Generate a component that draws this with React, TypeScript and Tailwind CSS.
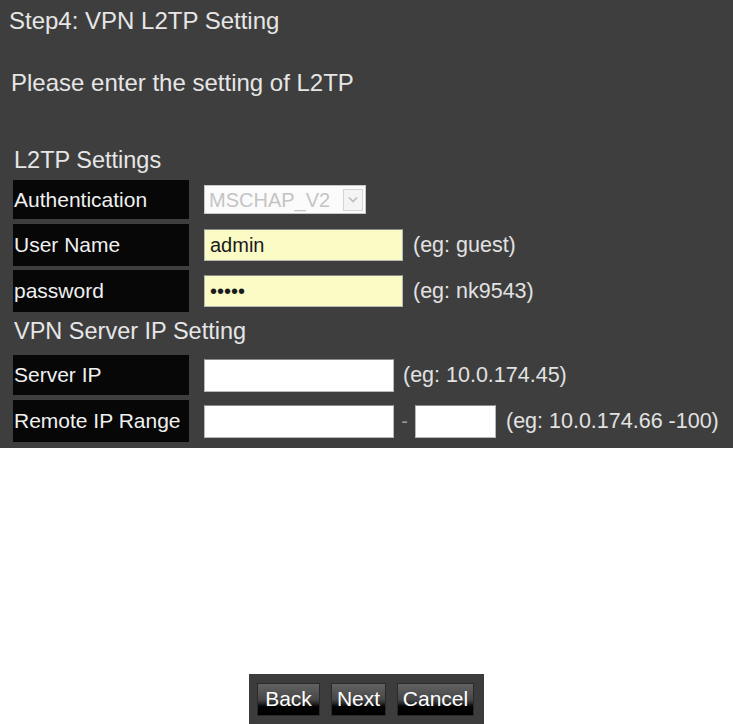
const font = "font-['Liberation_Sans',Arial,sans-serif]";

function Label({ children }: { children: React.ReactNode }) {
  return (
    <div className="w-[176px] h-full bg-[#070707] flex items-center pl-[1px] text-[21px] text-[#f0f0f0] shrink-0">
      {children}
    </div>
  );
}

function Hint({ children }: { children: React.ReactNode }) {
  return <span className="text-[21.5px] text-[#e2e2e2] whitespace-nowrap">{children}</span>;
}

function TextBox({ width, value, yellow, type = "text" }: { width: string; value?: string; yellow?: boolean; type?: string }) {
  return (
    <input
      type={type}
      readOnly
      defaultValue={value}
      className={`${width} ${yellow ? "h-[32px] bg-[#fbfbc6]" : "h-[33px] bg-white"} border border-[#b8b8b8] border-t-[#8a8a8a] px-[5px] text-[20px] text-[#1a1a1a] outline-none ${font}`}
    />
  );
}

export default function App() {
  return (
    <div className={`w-[733px] h-[724px] overflow-hidden bg-white ${font}`}>
      <div className="h-[448px] bg-[#3e3e3e] text-[#e6e6e6]">
        <div className="pt-[7px] pl-[9px] text-[24px] leading-[28px]">Step4: VPN L2TP Setting</div>
        <div className="mt-[34px] pl-[11px] text-[24px] leading-[28px]">Please enter the setting of L2TP</div>

        <div className="pl-[13px]">
          <div className="mt-[50px] text-[23.5px] leading-[27px] pl-[1px]">L2TP Settings</div>

          <div className="mt-[6px] h-[39px] flex items-center">
            <Label>Authentication</Label>
            <div className="ml-[15px] w-[162px] h-[29px] bg-[#fbfbfb] border border-[#c8c8c8] flex items-center justify-between pl-[4px] pr-[2px]">
              <span className="text-[20px] text-[#c4c4c4]">MSCHAP_V2</span>
              <span className="w-[20px] h-[22px] border border-[#d6d6d6] bg-[#f4f4f4] flex items-center justify-center">
                <svg width="10" height="7" viewBox="0 0 10 7">
                  <path d="M1 1.5 L5 5.5 L9 1.5" fill="none" stroke="#bcbcbc" strokeWidth="1.6" />
                </svg>
              </span>
            </div>
          </div>

          <div className="mt-[5px] h-[42px] flex items-center">
            <Label>User Name</Label>
            <div className="ml-[15px] flex items-center gap-[10px]">
              <TextBox width="w-[199px]" value="admin" yellow />
              <Hint>(eg: guest)</Hint>
            </div>
          </div>

          <div className="mt-[4px] h-[42px] flex items-center">
            <Label>password</Label>
            <div className="ml-[15px] flex items-center gap-[10px]">
              <TextBox width="w-[199px]" value="admin" yellow type="password" />
              <Hint>(eg: nk9543)</Hint>
            </div>
          </div>

          <div className="mt-[6px] text-[23.5px] leading-[27px] pl-[1px]">VPN Server IP Setting</div>

          <div className="mt-[10px] h-[40px] flex items-center">
            <Label>Server IP</Label>
            <div className="ml-[15px] flex items-center gap-[9px]">
              <TextBox width="w-[190px]" />
              <Hint>(eg: 10.0.174.45)</Hint>
            </div>
          </div>

          <div className="mt-[5px] h-[42px] flex items-center">
            <Label>Remote IP Range</Label>
            <div className="ml-[15px] flex items-center">
              <TextBox width="w-[190px]" />
              <span className="w-[21px] text-center text-[20px] text-[#9a9a9a]">-</span>
              <TextBox width="w-[81px]" />
              <span className="ml-[10px]">
                <Hint>(eg: 10.0.174.66 -100)</Hint>
              </span>
            </div>
          </div>
        </div>
      </div>

      <div className="mt-[226px] mx-auto w-[235px] h-[50px] bg-[#3c3c3c] flex items-start pt-[9px] pl-[8px] gap-[11px]">
        {["Back", "Next", "Cancel"].map((label, i) => (
          <button
            key={label}
            className={`${i === 0 ? "w-[63px]" : i === 1 ? "w-[55px]" : "w-[77px]"} h-[33px] text-[21px] leading-none text-white bg-[linear-gradient(to_bottom,#626262_0%,#474747_50%,#2a2a2a_62%,#050505_72%,#000_100%)] border border-[#2a2a2a] flex items-center justify-center pb-[2px]`}
          >
            {label}
          </button>
        ))}
      </div>
    </div>
  );
}
